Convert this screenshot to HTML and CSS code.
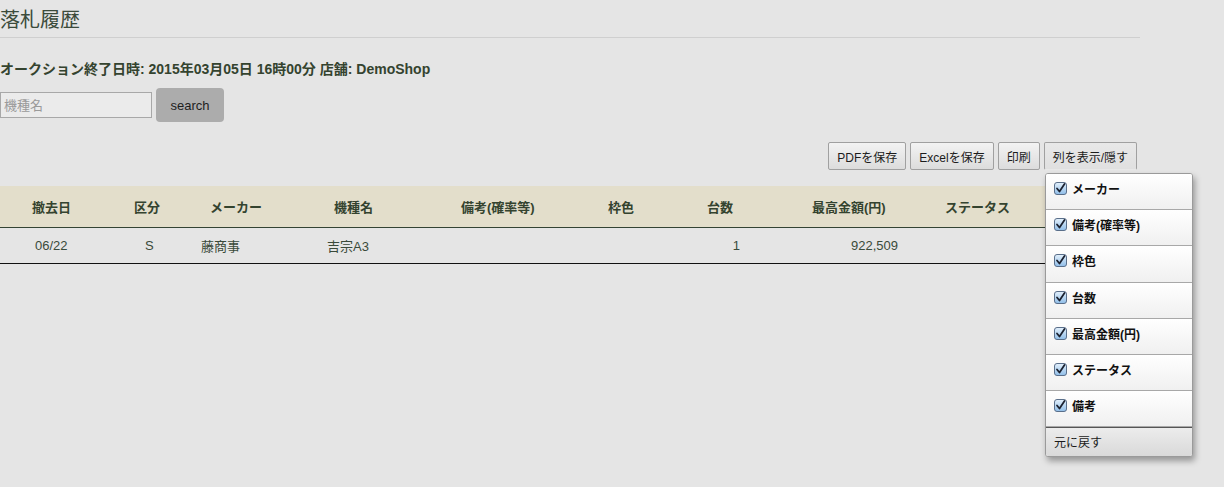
FILE: index.html
```html
<!DOCTYPE html>
<html lang="ja">
<head>
<meta charset="utf-8">
<title>落札履歴</title>
<link rel="stylesheet" href="styles.css">
</head>
<body>
<div class="page">
  <h1 class="title">落札履歴</h1>
  <p class="info">オークション終了日時: 2015年03月05日 16時00分 店舗: DemoShop</p>
  <div class="search">
    <input class="search-input" type="text" placeholder="機種名">
    <button class="search-btn">search</button>
  </div>
  <div class="toolbar">
    <button class="tb-btn">PDFを保存</button>
    <button class="tb-btn">Excelを保存</button>
    <button class="tb-btn">印刷</button>
    <button class="tb-btn tb-active">列を表示/隠す</button>
  </div>
  <table class="grid">
    <colgroup>
      <col class="w1"><col class="w2"><col class="w3"><col class="w4"><col class="w5">
      <col class="w6"><col class="w7"><col class="w8"><col class="w9"><col class="w10">
    </colgroup>
    <thead>
      <tr>
        <th>撤去日</th><th>区分</th><th>メーカー</th><th>機種名</th><th>備考(確率等)</th>
        <th>枠色</th><th>台数</th><th>最高金額(円)</th><th>ステータス</th><th>備考</th>
      </tr>
    </thead>
    <tbody>
      <tr>
        <td>06/22</td><td>S</td><td>藤商事</td><td>吉宗A3</td><td></td>
        <td></td><td>1</td><td>922,509</td><td></td><td></td>
      </tr>
    </tbody>
  </table>

  <svg class="defs" width="0" height="0" aria-hidden="true"><defs><linearGradient id="g" x1="0" y1="0" x2="0" y2="1"><stop offset="0" stop-color="#e4f1fc"/><stop offset="1" stop-color="#8fbde8"/></linearGradient></defs></svg>

  <ul class="colmenu">
    <li class="cm-item"><span class="cb"><svg width="13" height="13" viewBox="0 0 13 13"><rect x="0.5" y="0.5" width="12" height="12" rx="2.5" fill="url(#g)" stroke="#5a6f8a"/><path d="M3 6.5 L5.5 9.5 L10.5 2" fill="none" stroke="#1c2230" stroke-width="1.8" stroke-linecap="round" stroke-linejoin="round"/></svg></span>メーカー</li>
    <li class="cm-item"><span class="cb"><svg width="13" height="13" viewBox="0 0 13 13"><rect x="0.5" y="0.5" width="12" height="12" rx="2.5" fill="url(#g)" stroke="#5a6f8a"/><path d="M3 6.5 L5.5 9.5 L10.5 2" fill="none" stroke="#1c2230" stroke-width="1.8" stroke-linecap="round" stroke-linejoin="round"/></svg></span>備考(確率等)</li>
    <li class="cm-item"><span class="cb"><svg width="13" height="13" viewBox="0 0 13 13"><rect x="0.5" y="0.5" width="12" height="12" rx="2.5" fill="url(#g)" stroke="#5a6f8a"/><path d="M3 6.5 L5.5 9.5 L10.5 2" fill="none" stroke="#1c2230" stroke-width="1.8" stroke-linecap="round" stroke-linejoin="round"/></svg></span>枠色</li>
    <li class="cm-item"><span class="cb"><svg width="13" height="13" viewBox="0 0 13 13"><rect x="0.5" y="0.5" width="12" height="12" rx="2.5" fill="url(#g)" stroke="#5a6f8a"/><path d="M3 6.5 L5.5 9.5 L10.5 2" fill="none" stroke="#1c2230" stroke-width="1.8" stroke-linecap="round" stroke-linejoin="round"/></svg></span>台数</li>
    <li class="cm-item"><span class="cb"><svg width="13" height="13" viewBox="0 0 13 13"><rect x="0.5" y="0.5" width="12" height="12" rx="2.5" fill="url(#g)" stroke="#5a6f8a"/><path d="M3 6.5 L5.5 9.5 L10.5 2" fill="none" stroke="#1c2230" stroke-width="1.8" stroke-linecap="round" stroke-linejoin="round"/></svg></span>最高金額(円)</li>
    <li class="cm-item"><span class="cb"><svg width="13" height="13" viewBox="0 0 13 13"><rect x="0.5" y="0.5" width="12" height="12" rx="2.5" fill="url(#g)" stroke="#5a6f8a"/><path d="M3 6.5 L5.5 9.5 L10.5 2" fill="none" stroke="#1c2230" stroke-width="1.8" stroke-linecap="round" stroke-linejoin="round"/></svg></span>ステータス</li>
    <li class="cm-item"><span class="cb"><svg width="13" height="13" viewBox="0 0 13 13"><rect x="0.5" y="0.5" width="12" height="12" rx="2.5" fill="url(#g)" stroke="#5a6f8a"/><path d="M3 6.5 L5.5 9.5 L10.5 2" fill="none" stroke="#1c2230" stroke-width="1.8" stroke-linecap="round" stroke-linejoin="round"/></svg></span>備考</li>
    <li class="cm-restore">元に戻す</li>
  </ul>
</div>
</body>
</html>
```

FILE: styles.css
```css
* { box-sizing: border-box; }
html, body { margin: 0; padding: 0; }
body {
  background: #e5e5e5;
  font-family: "Liberation Sans", "Noto Sans CJK JP", sans-serif;
  color: #3a4a3a;
  min-height: 487px;
}
.page {
  position: relative;
  width: 1140px;
  min-height: 487px;
}
.defs { position: absolute; width: 0; height: 0; }
.title {
  margin: 0;
  padding: 8px 0 5px;
  font-size: 20px;
  line-height: 24px;
  font-weight: normal;
  color: #3b4b3b;
  border-bottom: 1px solid #cfcfcf;
}
.info {
  margin: 23px 0 0;
  font-size: 14px;
  line-height: 16px;
  font-weight: bold;
  color: #34432f;
}
.search {
  display: flex;
  align-items: center;
  gap: 4px;
  margin-top: 11px;
}
.search-input {
  width: 152px;
  height: 26px;
  margin: 0;
  border: 1px solid #a8a8a8;
  background: #ebebeb;
  font-family: inherit;
  font-size: 13px;
  padding: 0 3px;
}
.search-input::placeholder { color: #9a9a9a; }
.search-btn {
  width: 68px;
  height: 34px;
  border: none;
  border-radius: 4px;
  background: #acacac;
  font-family: inherit;
  font-size: 13px;
  color: #1e1e1e;
  padding: 0;
}
.toolbar {
  display: flex;
  justify-content: flex-end;
  gap: 4px;
  margin-top: 20px;
  padding-right: 3px;
}
.tb-btn {
  height: 28px;
  padding: 0 8px;
  border: 1px solid #a0a0a0;
  border-radius: 2px;
  background: linear-gradient(#f3f3f3, #dcdcdc);
  font-family: inherit;
  font-size: 12px;
  color: #1c1c1c;
}
.tb-active {
  background: linear-gradient(#e8e8e8, #e0e0e0);
  border-bottom-color: transparent;
}
.grid {
  width: 1140px;
  margin-top: 16px;
  border-collapse: collapse;
  table-layout: fixed;
}
.w1 { width: 120px; } .w2 { width: 75px; } .w3 { width: 125px; } .w4 { width: 130px; } .w5 { width: 145px; }
.w6 { width: 100px; } .w7 { width: 105px; } .w8 { width: 135px; } .w9 { width: 115px; } .w10 { width: 90px; }
.grid th {
  height: 41px;
  background: #e3decb;
  font-size: 13px;
  font-weight: bold;
  text-align: left;
  color: #34432f;
  border-bottom: 1px solid #344434;
  padding: 0 0 0 10px;
  white-space: nowrap;
}
.grid th:nth-child(1) { padding-left: 32px; }
.grid th:nth-child(2) { padding-left: 14px; }
.grid th:nth-child(3) { padding-left: 15px; }
.grid th:nth-child(4) { padding-left: 14px; }
.grid th:nth-child(5) { padding-left: 11px; }
.grid th:nth-child(6) { padding-left: 13px; }
.grid th:nth-child(7) { padding-left: 12px; }
.grid th:nth-child(8) { padding-left: 12px; }
.grid th:nth-child(9) { padding-left: 10px; }
.grid td {
  height: 36px;
  font-size: 13px;
  color: #3a4a3a;
  border-bottom: 1px solid #111;
  padding: 0;
  white-space: nowrap;
}
.grid td:nth-child(1) { padding-left: 35px; }
.grid td:nth-child(2) { padding-left: 25px; }
.grid td:nth-child(3) { padding-left: 6px; }
.grid td:nth-child(4) { padding-left: 7px; }
.grid td:nth-child(7) { text-align: right; padding-right: 60px; }
.grid td:nth-child(8) { text-align: right; padding-right: 37px; }
.colmenu {
  position: absolute;
  left: 1045px;
  top: 173px;
  width: 148px;
  margin: 0;
  padding: 0;
  list-style: none;
  background: #fff;
  border: 1px solid #9a9a9a;
  border-radius: 3px;
  box-shadow: 2px 4px 6px rgba(0,0,0,0.35);
  overflow: hidden;
  z-index: 5;
}
.cm-item {
  display: flex;
  align-items: center;
  gap: 5px;
  height: 36.2px;
  padding: 0 0 6px 8px;
  background: linear-gradient(#ffffff, #f0f0f0);
  border-bottom: 1px solid #a8a8a8;
  font-size: 12px;
  font-weight: bold;
  color: #111;
}
.cb { display: flex; width: 13px; height: 13px; }
.cm-restore {
  height: 29px;
  display: flex;
  align-items: center;
  padding: 0 0 2px 8px;
  background: linear-gradient(#ececec, #d9d9d9);
  border-top: 1px solid #555;
  font-size: 12px;
  color: #1a1a1a;
}
```
